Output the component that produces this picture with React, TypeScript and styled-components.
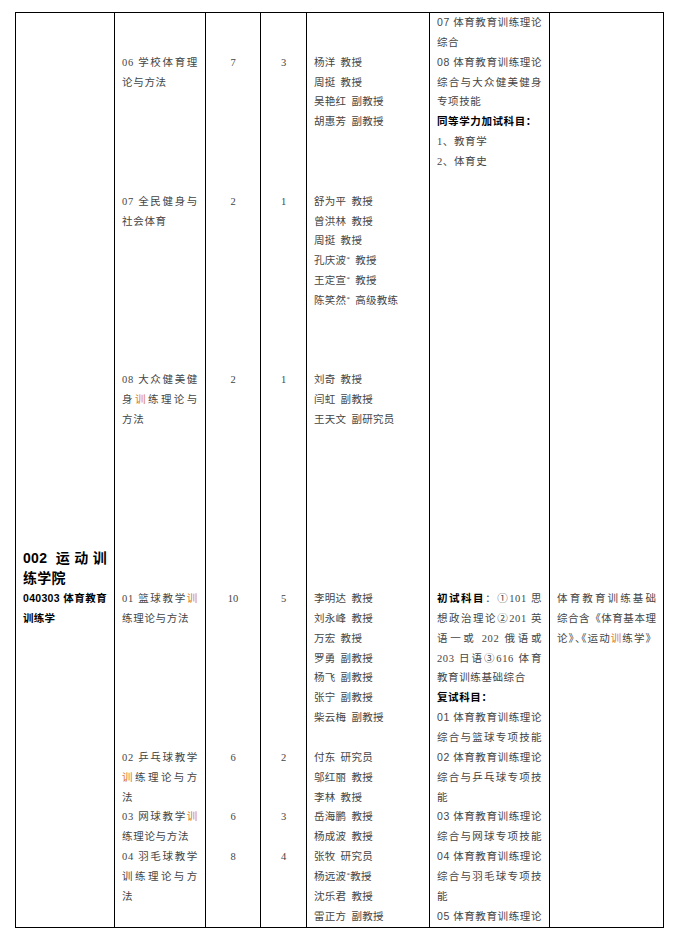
import React from "react";
import styled, { createGlobalStyle } from "styled-components";

const L = 19.86;
const ROWS = 46;

const Global = createGlobalStyle`
  html, body { margin: 0; padding: 0; background: #fff; }
  body { width: 674px; height: 940px; overflow: hidden; }
`;

const Page = styled.div`
  padding: 12px 0 0 15px;
`;

const Table = styled.div`
  display: grid;
  grid-template-columns: 98px 91px 55px 46px 123px 120px 114px;
  width: 649px;
  box-sizing: border-box;
  border: 1px solid #000;
  font-family: "Liberation Serif", "Noto Sans CJK SC", serif;
  font-size: 10.5px;
  color: #454545;
`;

const Cell = styled.div<{ $first?: boolean; $center?: boolean; $ls?: number }>`
  border-left: ${(p) => (p.$first ? "none" : "1px solid #000")};
  padding: 0 7px;
  min-height: ${ROWS * L}px;
  text-align: ${(p) => (p.$center ? "center" : "left")};
  letter-spacing: ${(p) => (p.$ls ?? 0.6)}px;
`;

const Line = styled.div<{ $j?: boolean; $bold?: boolean; $big?: boolean }>`
  height: ${L}px;
  line-height: ${L}px;
  overflow: visible;
  text-align: ${(p) => (p.$j ? "justify" : "inherit")};
  text-align-last: ${(p) => (p.$j ? "justify" : "auto")};
  font-weight: ${(p) => (p.$bold ? 700 : "inherit")};
  color: ${(p) => (p.$bold ? "#000" : "inherit")};
  font-size: ${(p) => (p.$big ? "14px" : "inherit")};
`;

const Gap = styled.div<{ $n: number }>`
  height: ${(p) => p.$n * L}px;
`;

const Hl = styled.span`
  color: #d9772e;
`;

const Sans = styled.span`
  font-family: "Liberation Sans", "Noto Sans CJK SC", sans-serif;
`;

const Strong = styled.span`
  font-weight: 700;
  color: #000;
`;

const Half = styled.span`
  font-feature-settings: "halt";
`;

const Star = styled.span`
  font-size: 7px;
  vertical-align: 3px;
  line-height: 0;
`;

const Title = styled.span`
  margin-left: 5px;
`;

const LeftHead = styled.div`
  font-family: "Liberation Sans", "Noto Sans CJK SC", sans-serif;
  color: #000;
  font-weight: 700;
`;

type Ln = { t: React.ReactNode; j?: boolean; b?: boolean; big?: boolean };
type Block = { at: number; lines: Ln[] };

function renderBlocks(blocks: Block[]) {
  const out: React.ReactNode[] = [];
  let cur = 0;
  blocks.forEach((b, bi) => {
    if (b.at > cur) out.push(<Gap key={`g${bi}`} $n={b.at - cur} />);
    b.lines.forEach((l, li) => {
      out.push(
        <Line key={`l${bi}-${li}`} $j={l.j} $bold={l.b} $big={l.big}>
          {l.t}
        </Line>
      );
    });
    cur = b.at + b.lines.length;
  });
  return out;
}

const nm = (name: string, title: string, star?: boolean, nospace?: boolean) => (
  <>
    {name}
    {star && <Star>*</Star>}
    {nospace ? title : <Title>{title}</Title>}
  </>
);

const col1: Block[] = [
  {
    at: 27,
    lines: [
      { t: "002 运动训", j: true, big: true },
      { t: "练学院", big: true },
      { t: "040303 体育教育", j: true },
      { t: "训练学" },
    ],
  },
];

const col2: Block[] = [
  { at: 2, lines: [{ t: "06 学校体育理", j: true }, { t: "论与方法" }] },
  { at: 9, lines: [{ t: "07 全民健身与", j: true }, { t: "社会体育" }] },
  {
    at: 18,
    lines: [
      { t: "08 大众健美健", j: true },
      { t: <>身<Hl>训</Hl>练理论与</>, j: true },
      { t: "方法" },
    ],
  },
  {
    at: 29,
    lines: [{ t: <>01 篮球教学<Hl>训</Hl></>, j: true }, { t: "练理论与方法" }],
  },
  {
    at: 37,
    lines: [
      { t: "02 乒乓球教学", j: true },
      { t: <><Hl>训</Hl>练理论与方</>, j: true },
      { t: "法" },
    ],
  },
  {
    at: 40,
    lines: [{ t: <>03 网球教学<Hl>训</Hl></>, j: true }, { t: "练理论与方法" }],
  },
  {
    at: 42,
    lines: [
      { t: "04 羽毛球教学", j: true },
      { t: "训练理论与方", j: true },
      { t: "法" },
    ],
  },
];

const num = (vals: [number, string][]): Block[] =>
  vals.map(([at, v]) => ({ at, lines: [{ t: v }] }));

const col3 = num([
  [2, "7"],
  [9, "2"],
  [18, "2"],
  [29, "10"],
  [37, "6"],
  [40, "6"],
  [42, "8"],
]);

const col4 = num([
  [2, "3"],
  [9, "1"],
  [18, "1"],
  [29, "5"],
  [37, "2"],
  [40, "3"],
  [42, "4"],
]);

const col5: Block[] = [
  {
    at: 2,
    lines: [
      { t: nm("杨洋", "教授") },
      { t: nm("周挺", "教授") },
      { t: nm("吴艳红", "副教授") },
      { t: nm("胡惠芳", "副教授") },
    ],
  },
  {
    at: 9,
    lines: [
      { t: nm("舒为平", "教授") },
      { t: nm("曾洪林", "教授") },
      { t: nm("周挺", "教授") },
      { t: nm("孔庆波", "教授", true) },
      { t: nm("王定宣", "教授", true) },
      { t: nm("陈笑然", "高级教练", true) },
    ],
  },
  {
    at: 18,
    lines: [
      { t: nm("刘奇", "教授") },
      { t: nm("闫虹", "副教授") },
      { t: nm("王天文", "副研究员") },
    ],
  },
  {
    at: 29,
    lines: [
      { t: nm("李明达", "教授") },
      { t: nm("刘永峰", "教授") },
      { t: nm("万宏", "教授") },
      { t: nm("罗勇", "副教授") },
      { t: nm("杨飞", "副教授") },
      { t: nm("张宁", "副教授") },
      { t: nm("柴云梅", "副教授") },
    ],
  },
  {
    at: 37,
    lines: [
      { t: nm("付东", "研究员") },
      { t: nm("邬红丽", "教授") },
      { t: nm("李林", "教授") },
      { t: nm("岳海鹏", "教授") },
      { t: nm("杨成波", "教授") },
      { t: nm("张牧", "研究员") },
      { t: nm("杨远波", "教授", true, true) },
      { t: nm("沈乐君", "教授") },
      { t: nm("雷正方", "副教授") },
    ],
  },
];

const exam = (n: string) => (
  <>
    <Sans>{n}</Sans> 体育教育训练理论
  </>
);

const col6: Block[] = [
  {
    at: 0,
    lines: [
      { t: exam("07"), j: true },
      { t: "综合" },
      { t: exam("08"), j: true },
      { t: "综合与大众健美健身", j: true },
      { t: "专项技能" },
      { t: "同等学力加试科目：", b: true },
      { t: "1、教育学" },
      { t: "2、体育史" },
    ],
  },
  {
    at: 29,
    lines: [
      { t: <><Strong>初试科目</Strong>：①101 思</>, j: true },
      { t: "想政治理论②201 英", j: true },
      { t: "语一或 202 俄语或", j: true },
      { t: "203 日语③616 体育", j: true },
      { t: "教育训练基础综合" },
      { t: "复试科目：", b: true },
      { t: exam("01"), j: true },
      { t: "综合与篮球专项技能", j: true },
      { t: exam("02"), j: true },
      { t: "综合与乒乓球专项技", j: true },
      { t: "能" },
      { t: exam("03"), j: true },
      { t: "综合与网球专项技能", j: true },
      { t: exam("04"), j: true },
      { t: "综合与羽毛球专项技", j: true },
      { t: "能" },
      { t: exam("05"), j: true },
    ],
  },
];

const col7: Block[] = [
  {
    at: 29,
    lines: [
      { t: "体育教育训练基础", j: true },
      { t: "综合含《体育基本理", j: true },
      {
        t: (
          <>
            论》<Half>、《</Half>运动<Hl>训</Hl>练学》
          </>
        ),
        j: true,
      },
    ],
  },
];

export default function App() {
  return (
    <>
      <Global />
      <Page>
        <Table>
          <Cell $first $ls={0.3}>
            <LeftHead>{renderBlocks(col1)}</LeftHead>
          </Cell>
          <Cell $ls={0.7}>{renderBlocks(col2)}</Cell>
          <Cell $center $ls={0}>{renderBlocks(col3)}</Cell>
          <Cell $center $ls={0}>{renderBlocks(col4)}</Cell>
          <Cell $ls={0.3}>{renderBlocks(col5)}</Cell>
          <Cell $ls={0.6}>{renderBlocks(col6)}</Cell>
          <Cell $ls={0}>{renderBlocks(col7)}</Cell>
        </Table>
      </Page>
    </>
  );
}
